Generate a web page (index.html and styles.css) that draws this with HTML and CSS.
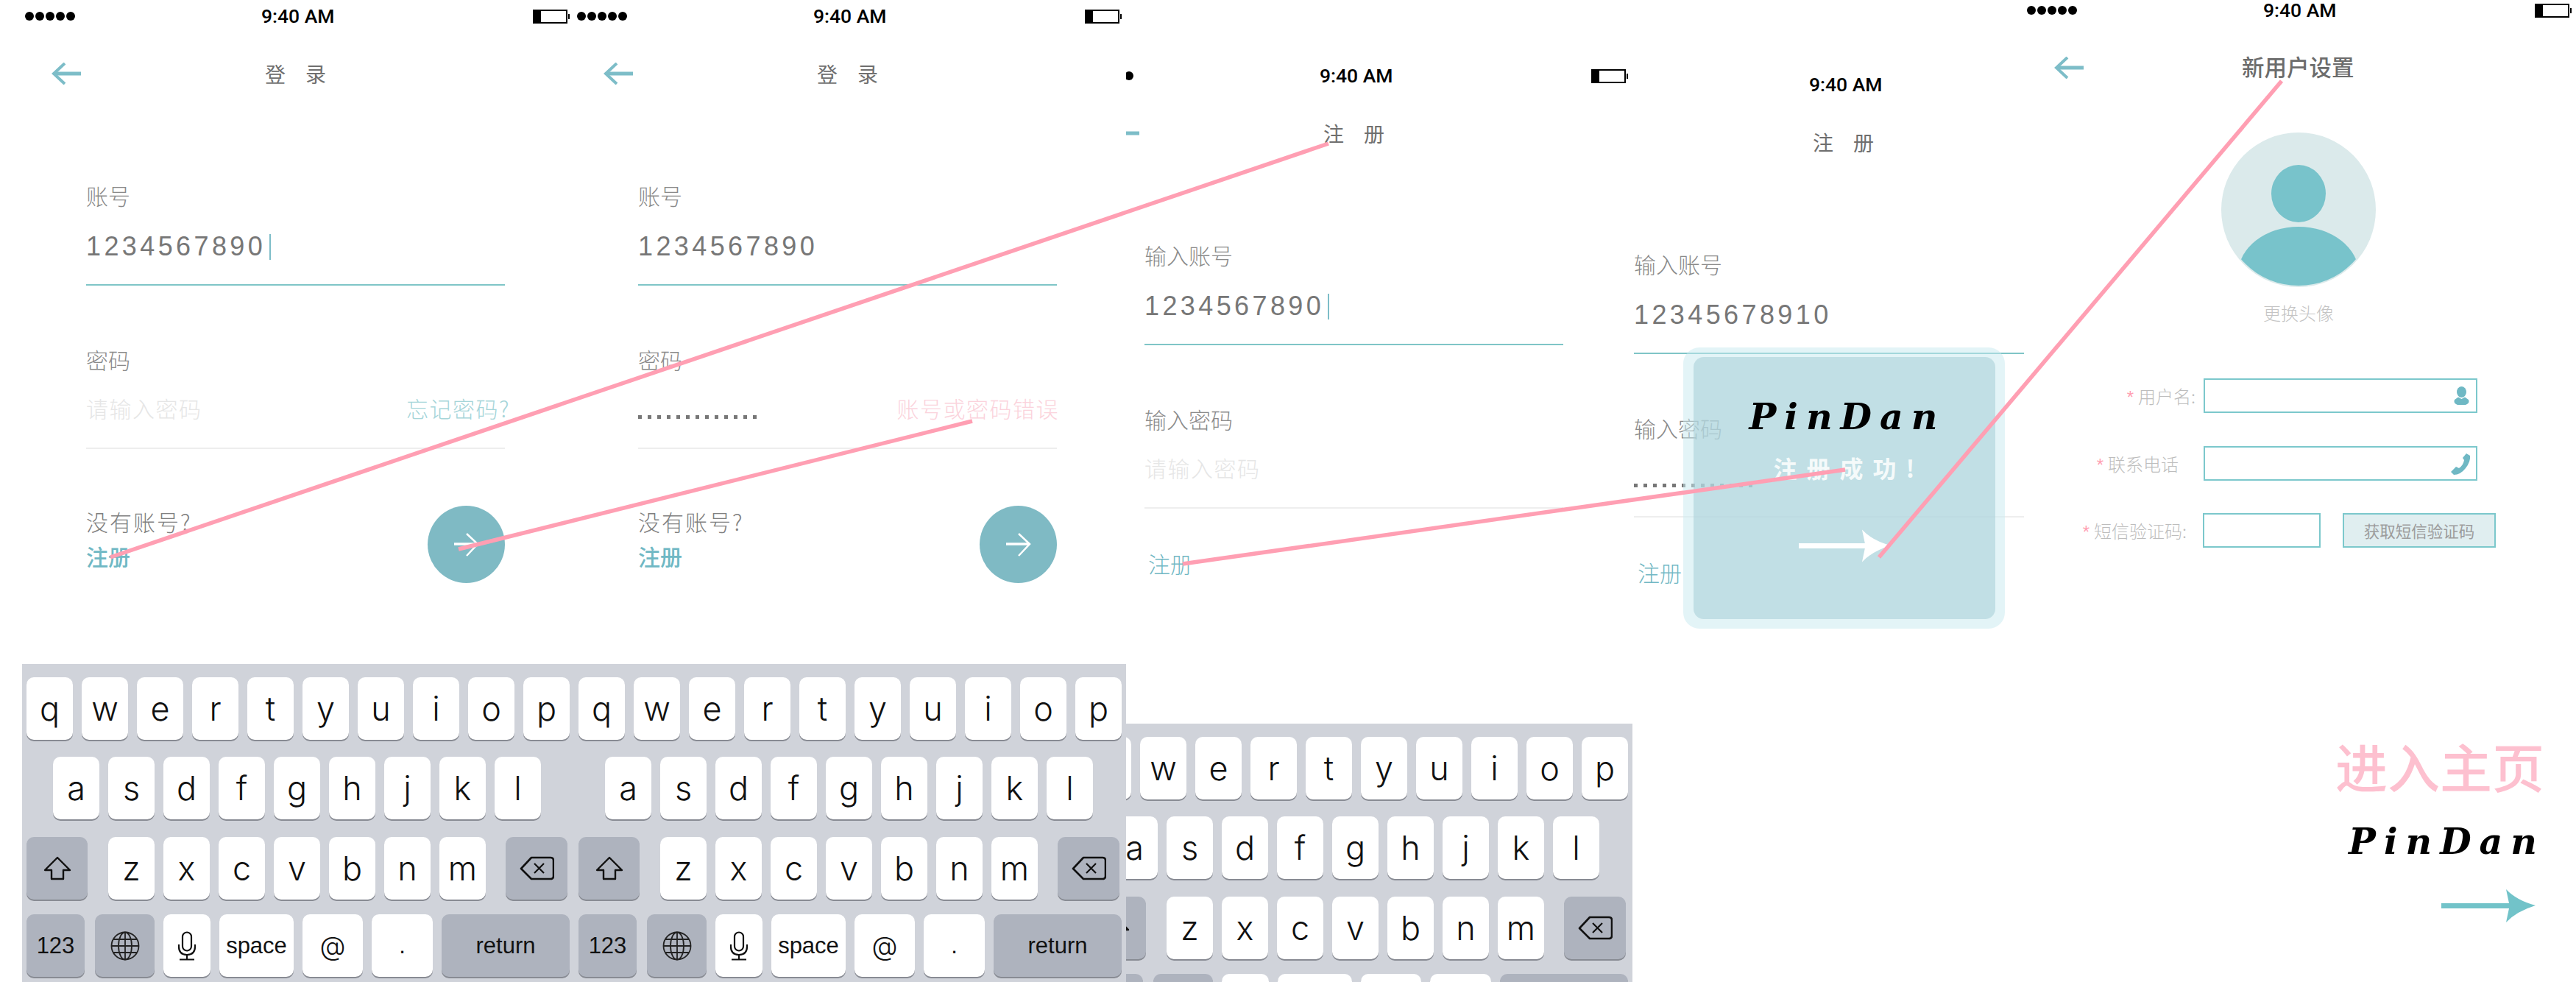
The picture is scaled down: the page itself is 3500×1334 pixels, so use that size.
FILE: index.html
```html
<!DOCTYPE html>
<html lang="zh-CN">
<head>
<meta charset="utf-8">
<title>PinDan</title>
<link rel="stylesheet" href="styles.css">
</head>
<body>
<svg class="defs" width="0" height="0" aria-hidden="true">
  <symbol id="i-back" viewBox="0 0 40 30"><path d="M4 15H40" stroke-width="5" fill="none"/><path d="M18 1 3 15 18 29" stroke-width="4" fill="none"/></symbol>
  <symbol id="i-next" viewBox="0 0 34 32"><path d="M0 15H32" stroke-width="3.5" fill="none"/><path d="M17 1 32 15 17 31" stroke-width="2.5" fill="none"/></symbol>
  <symbol id="i-shift" viewBox="0 0 38 33"><path d="M19 2 2 19H11V31H27V19H36Z" fill="none" stroke="#111" stroke-width="2.4" stroke-linejoin="round"/></symbol>
  <symbol id="i-del" viewBox="0 0 47 33"><path d="M16 2H42Q46 2 46 6V27Q46 31 42 31H16L2 17Z" fill="none" stroke="#111" stroke-width="2.6" stroke-linejoin="round"/><path d="M20 10 33 23M33 10 20 23" fill="none" stroke="#111" stroke-width="2.2"/></symbol>
  <symbol id="i-globe" viewBox="0 0 40 40"><g fill="none" stroke="#222" stroke-width="1.8"><circle cx="20" cy="20" r="18.5"/><ellipse cx="20" cy="20" rx="9" ry="18.5"/><path d="M20 1.500V38.500M1.500 20H38.500M4 11H36M4 29H36"/></g></symbol>
  <symbol id="i-mic" viewBox="0 0 26 40"><g fill="none" stroke="#111" stroke-width="2.2"><rect x="7" y="1.500" width="12" height="25" rx="6"/><path d="M2 18V21Q2 32 13 32T24 21V18M13 32V38M3 38.500H23"/></g></symbol>
  <symbol id="i-long" viewBox="0 0 128 45"><path d="M0 19H92L88 0Q102 15 128 22Q102 30 88 45L92 26H0Z"/></symbol>
</svg>

<main class="board">

  <section class="screen s4">
    <div class="top"><div class="status"><span class="dots-col"></span><span class="time">9:40 AM</span></div>
      <div class="nav"><span class="nav-gap"></span><h1 class="title">注册</h1></div>
      <div class="form">
        <p class="label">输入账号</p>
        <div class="value"><span>12345678910</span></div>
        <div class="rule rule-on"></div>
        <p class="label label-2">输入密码</p>
        <div class="pw-row"><span class="pw-dots"></span></div>
        <div class="rule"></div>
        <a class="reg-plain">注册</a>
      </div>
    </div>
    <div class="modal">
      <div class="modal-in">
        <p class="brand">PinDan</p>
        <p class="ok">注册成功!</p>
        <svg class="modal-arrow"><use href="#i-long"/></svg>
      </div>
    </div>
  </section>

  <section class="screen s3">
    <div class="top"><div class="status"><span class="dots-col"><i></i><i></i><i></i><i></i><i></i></span><span class="time">9:40 AM</span><span class="battery"></span></div>
      <div class="nav"><svg class="back"><use href="#i-back"/></svg><h1 class="title">注册</h1></div>
      <div class="form">
        <p class="label">输入账号</p>
        <div class="value"><span>1234567890</span><i class="caret"></i></div>
        <div class="rule rule-on"></div>
        <p class="label label-2">输入密码</p>
        <div class="pw-row"><span class="hint">请输入密码</span></div>
        <div class="rule"></div>
        <a class="reg-plain">注册</a>
      </div>
    </div>
    <div class="kb">
      <div class="kr kr1"><b class="k">q</b><b class="k">w</b><b class="k">e</b><b class="k">r</b><b class="k">t</b><b class="k">y</b><b class="k">u</b><b class="k">i</b><b class="k">o</b><b class="k">p</b></div>
      <div class="kr kr2"><b class="k">a</b><b class="k">s</b><b class="k">d</b><b class="k">f</b><b class="k">g</b><b class="k">h</b><b class="k">j</b><b class="k">k</b><b class="k">l</b></div>
      <div class="kr kr3"><b class="k k-g k-shift"><svg class="ic-shift"><use href="#i-shift"/></svg></b><b class="k">z</b><b class="k">x</b><b class="k">c</b><b class="k">v</b><b class="k">b</b><b class="k">n</b><b class="k">m</b><b class="k k-g k-del"><svg class="ic-del"><use href="#i-del"/></svg></b></div>
      <div class="kr kr4"><b class="k k-g k-num"></b><b class="k k-g k-globe"></b><b class="k k-mic"></b><b class="k k-space"></b><b class="k k-at"></b><b class="k k-dot"></b><b class="k k-g k-ret"></b></div>
    </div>
  </section>

  <section class="screen s2">
    <div class="top"><div class="status"><span class="dots-col"><i></i><i></i><i></i><i></i><i></i></span><span class="time">9:40 AM</span><span class="battery"></span></div>
      <div class="nav"><svg class="back"><use href="#i-back"/></svg><h1 class="title">登录</h1></div>
      <div class="form">
        <p class="label">账号</p>
        <div class="value"><span>1234567890</span></div>
        <div class="rule rule-on"></div>
        <p class="label label-2">密码</p>
        <div class="pw-row"><span class="pw-dots"></span><span class="err">账号或密码错误</span></div>
        <div class="rule"></div>
        <div class="foot">
          <div class="foot-left"><p class="ask">没有账号?</p><a class="reg">注册</a></div>
          <div class="go"><svg class="go-arrow"><use href="#i-next"/></svg></div>
        </div>
      </div>
    </div>
    <div class="kb">
      <div class="kr kr1"><b class="k">q</b><b class="k">w</b><b class="k">e</b><b class="k">r</b><b class="k">t</b><b class="k">y</b><b class="k">u</b><b class="k">i</b><b class="k">o</b><b class="k">p</b></div>
      <div class="kr kr2"><b class="k">a</b><b class="k">s</b><b class="k">d</b><b class="k">f</b><b class="k">g</b><b class="k">h</b><b class="k">j</b><b class="k">k</b><b class="k">l</b></div>
      <div class="kr kr3"><b class="k k-g k-shift"><svg class="ic-shift"><use href="#i-shift"/></svg></b><b class="k">z</b><b class="k">x</b><b class="k">c</b><b class="k">v</b><b class="k">b</b><b class="k">n</b><b class="k">m</b><b class="k k-g k-del"><svg class="ic-del"><use href="#i-del"/></svg></b></div>
      <div class="kr kr4"><b class="k k-g k-num sm">123</b><b class="k k-g k-globe"><svg class="ic-globe"><use href="#i-globe"/></svg></b><b class="k k-mic"><svg class="ic-mic"><use href="#i-mic"/></svg></b><b class="k k-space sm">space</b><b class="k k-at">@</b><b class="k k-dot sm">.</b><b class="k k-g k-ret sm">return</b></div>
    </div>
  </section>

  <section class="screen s1">
    <div class="top"><div class="status"><span class="dots-col"><i></i><i></i><i></i><i></i><i></i></span><span class="time">9:40 AM</span><span class="battery"></span></div>
      <div class="nav"><svg class="back"><use href="#i-back"/></svg><h1 class="title">登录</h1></div>
      <div class="form">
        <p class="label">账号</p>
        <div class="value"><span>1234567890</span><i class="caret"></i></div>
        <div class="rule rule-on"></div>
        <p class="label label-2">密码</p>
        <div class="pw-row"><span class="hint">请输入密码</span><span class="forgot">忘记密码?</span></div>
        <div class="rule"></div>
        <div class="foot">
          <div class="foot-left"><p class="ask">没有账号?</p><a class="reg">注册</a></div>
          <div class="go"><svg class="go-arrow"><use href="#i-next"/></svg></div>
        </div>
      </div>
    </div>
    <div class="kb">
      <div class="kr kr1"><b class="k">q</b><b class="k">w</b><b class="k">e</b><b class="k">r</b><b class="k">t</b><b class="k">y</b><b class="k">u</b><b class="k">i</b><b class="k">o</b><b class="k">p</b></div>
      <div class="kr kr2"><b class="k">a</b><b class="k">s</b><b class="k">d</b><b class="k">f</b><b class="k">g</b><b class="k">h</b><b class="k">j</b><b class="k">k</b><b class="k">l</b></div>
      <div class="kr kr3"><b class="k k-g k-shift"><svg class="ic-shift"><use href="#i-shift"/></svg></b><b class="k">z</b><b class="k">x</b><b class="k">c</b><b class="k">v</b><b class="k">b</b><b class="k">n</b><b class="k">m</b><b class="k k-g k-del"><svg class="ic-del"><use href="#i-del"/></svg></b></div>
      <div class="kr kr4"><b class="k k-g k-num sm">123</b><b class="k k-g k-globe"><svg class="ic-globe"><use href="#i-globe"/></svg></b><b class="k k-mic"><svg class="ic-mic"><use href="#i-mic"/></svg></b><b class="k k-space sm">space</b><b class="k k-at">@</b><b class="k k-dot sm">.</b><b class="k k-g k-ret sm">return</b></div>
    </div>
  </section>

  <section class="screen s5">
    <div class="status"><span class="dots-col"><i></i><i></i><i></i><i></i><i></i></span><span class="time">9:40 AM</span><span class="battery"></span></div>
    <div class="nav"><svg class="back"><use href="#i-back"/></svg><h1 class="title title-5">新用户设置</h1></div>
    <div class="avatar-box">
      <svg class="avatar" viewBox="0 0 210 210">
        <defs><clipPath id="ava"><circle cx="105" cy="105" r="103"/></clipPath></defs>
        <circle cx="105" cy="105" r="105" fill="#dbeaeb"/>
        <ellipse cx="105" cy="83" rx="37" ry="39" fill="#78c3cb"/>
        <ellipse cx="105" cy="192" rx="82" ry="64" fill="#78c3cb" clip-path="url(#ava)"/>
      </svg>
      <p class="avatar-cap">更换头像</p>
    </div>
    <div class="fields">
      <div class="f-row">
        <label class="f-label f1"><em>*</em>用户名:</label>
        <div class="f-input f-wide">
          <svg class="f-ic" viewBox="0 0 21 26"><ellipse cx="10.500" cy="7.500" rx="6.500" ry="7.500"/><path d="M6 14.500 10.500 17 15 14.500 20 18Q22 23 16 25H5Q-1 23 1 18Z"/></svg>
        </div>
      </div>
      <div class="f-row f-row2">
        <label class="f-label f2"><em>*</em>联系电话</label>
        <div class="f-input f-wide">
          <svg class="f-ic f-phone" viewBox="0 0 28 30"><path d="M22 1 27 4Q28 12 21 21T5 30L1 26 8 19 12 21Q18 17 19 10L17 7Z"/></svg>
        </div>
      </div>
      <div class="f-row f-row3">
        <label class="f-label f3"><em>*</em>短信验证码:</label>
        <div class="f-input f-code"></div>
        <button class="f-btn">获取短信验证码</button>
      </div>
    </div>
    <div class="enter">
      <p class="enter-txt">进入主页</p>
      <p class="brand brand-5">PinDan</p>
      <svg class="enter-arrow"><use href="#i-long"/></svg>
    </div>
  </section>

  <svg class="links" viewBox="0 0 3500 1334">
    <path d="M150 757 1805 195"/>
    <path d="M623 746 1321 572"/>
    <path d="M1607 766 2507 638"/>
    <path d="M2553 757 3100 110"/>
  </svg>
</main>
</body>
</html>
```

FILE: styles.css
```css
* { box-sizing: border-box; margin: 0; padding: 0; }
html, body { background: #fff; }
body { width: 3500px; height: 1334px; overflow: hidden; font-family: "Noto Sans CJK SC", "Liberation Sans", sans-serif; }
.defs { position: absolute; }

/* free canvas of artboards */
.board { position: relative; width: 3500px; height: 1334px; overflow: hidden; background: #fff; }
.screen { position: absolute; width: 780px; height: 1334px; background: #fff; }
.s1 { left: 0; top: 0; z-index: 4; }
.s2 { left: 750px; top: 0; z-index: 3; }
.s3 { left: 1438px; top: 81px; z-index: 2; }
.s4 { left: 2103px; top: 93px; z-index: 1; background: transparent; }
.s5 { left: 2750px; top: -8px; width: 750px; height: 1342px; z-index: 5; }
.links { position: absolute; left: 0; top: 0; width: 3500px; height: 1334px; z-index: 9; pointer-events: none; }
.links path { fill: none; stroke: #ff9fb3; stroke-width: 5.500px; }

/* status bar */
.top { height: 902px; }
.status { display: flex; align-items: center; height: 44px; padding-left: 34px; }
.s5 .status { margin-left: -30px; width: 780px; }
.dots-col { display: flex; gap: 2px; width: 321px; height: 12px; }
.dots-col i { width: 12px; height: 12px; border-radius: 50%; background: #000; }
.time { width: 98px; font: 500 26.500px/26px Roboto, "Liberation Sans", sans-serif; color: #000; white-space: nowrap; }
.battery { position: relative; width: 47px; height: 19px; margin-left: 271px; border: 2.500px solid #000; border-left-width: 11px; }
.battery::after { content: ""; position: absolute; right: -5px; top: 4px; width: 2px; height: 7px; background: #000; }

/* nav */
.nav { display: flex; align-items: center; height: 30px; margin-top: 41px; padding-left: 70px; }
.s5 .nav { padding-left: 41px; }
.back { width: 40px; height: 30px; stroke: #7dbdc8; flex: none; }
.nav-gap { width: 40px; }
.title { margin-left: 250px; font-size: 28px; font-weight: 400; line-height: 30px; letter-spacing: 27px; color: #6f6f6f; white-space: nowrap; }
.title-5 { margin-left: 215px; margin-top: -4px; font-size: 30.500px; font-weight: 500; letter-spacing: 0; color: #6c6c6c; }

/* login / register form */
.form { width: 686px; padding-left: 117px; }
.label { height: 30px; margin-top: 135px; font-size: 30px; font-weight: 300; line-height: 30px; color: #8a8a8a; white-space: nowrap; }
.label-2 { margin-top: 85px; }
.value { display: flex; align-items: center; height: 36px; margin-top: 37px; font: 36px/36px "Liberation Sans", sans-serif; letter-spacing: 4.400px; color: #777; }
.label-2 + .pw-row { margin-top: 36px; }
.caret { width: 2px; height: 35px; margin-left: 5px; background: #7dbdc8; }
.rule { height: 2px; margin-top: 33px; background: #eeeeee; }
.rule-on { background: #7fc5c7; }
.pw-row { display: flex; justify-content: space-between; height: 30px; font-size: 30px; font-weight: 300; line-height: 30px; white-space: nowrap; }
.pw-row + .rule { margin-top: 39px; }
.hint { color: #e6e6e6; letter-spacing: 1.500px; }
.forgot { margin-right: -7px; color: #a6d5d9; letter-spacing: 1.500px; }
.err { margin-right: -3px; color: #fbd3dc; letter-spacing: 1.500px; }
.pw-dots { width: 164px; height: 5px; margin-top: 25px; background: repeating-linear-gradient(90deg, #777 0 5px, transparent 5px 13px); }
.foot { display: flex; justify-content: space-between; margin-top: 77px; }
.foot-left { padding-top: 6px; }
.ask { font-size: 30px; font-weight: 300; line-height: 30px; letter-spacing: 2px; color: #808080; }
.reg { display: block; margin-top: 17px; font-size: 30px; font-weight: 500; line-height: 30px; color: #6fb8c4; }
.reg-plain { display: block; margin: 59px 0 0 5px; font-size: 30px; font-weight: 300; line-height: 30px; color: #72b8c4; }
.go { display: flex; align-items: center; justify-content: center; width: 105px; height: 105px; border-radius: 50%; background: #7fbac4; }
.go-arrow { width: 34px; height: 32px; stroke: #fff; }

/* keyboard */
.kb { width: 750px; height: 432px; margin-left: 30px; padding: 18px 6px 0; overflow: hidden; background: #d0d3da; }
.kr { display: flex; gap: 12px; }
.kr2 { margin-top: 23px; padding-left: 36px; }
.kr3 { margin-top: 24px; }
.kr4 { margin-top: 20px; }
.k { display: flex; align-items: center; justify-content: center; flex: none; width: 63px; height: 85px; border-radius: 10px; background: #fff; box-shadow: 0 2px 0 #888b93; font: 300 45px/1 Inter, "Liberation Sans", sans-serif; color: #111; }
.k-g { background: #aeb3be; }
.k-shift { width: 83px; margin-right: 16px; }
.k-del { width: 84px; margin-left: 15px; }
.k-num { width: 79px; }
.k-globe { width: 81px; margin-left: 2px; }
.k-mic { width: 64px; }
.k-space { width: 101px; }
.k-at { width: 82px; font-size: 36px; }
.k-dot { width: 83px; }
.k-ret { width: 174px; }
.sm { font: 400 31px/1 "Liberation Sans", sans-serif; }
.ic-shift { width: 38px; height: 33px; }
.ic-del { width: 47px; height: 33px; }
.ic-globe { width: 40px; height: 40px; }
.ic-mic { width: 26px; height: 40px; }

/* success modal */
.modal { position: absolute; left: 184px; top: 379px; width: 437px; height: 382px; padding: 13px 13px 13px 14px; border-radius: 22px; background: rgba(199, 233, 239, .5); }
.modal-in { display: flex; flex-direction: column; align-items: center; height: 356px; padding-top: 58px; border-radius: 14px; background: rgba(170, 209, 217, .6); }
.brand { padding-left: 8px; font: italic 700 49px/46px "DejaVu Serif", serif; letter-spacing: 11px; color: #000; white-space: nowrap; }
.ok { margin-top: 24px; padding-left: 12px; font-size: 32px; font-weight: 700; line-height: 44px; letter-spacing: 13px; color: rgba(255, 255, 255, .85); white-space: nowrap; }
.modal-arrow { width: 125px; height: 45px; margin-top: 62px; fill: #fff; }

/* new user */
.avatar-box { display: flex; flex-direction: column; align-items: center; margin-top: 73px; padding-right: 4px; }
.avatar { width: 210px; height: 210px; }
.avatar-cap { margin-top: 21px; font-size: 24px; font-weight: 300; line-height: 28px; color: #c4c4c4; }
.fields { margin-top: 75px; }
.f-row { display: flex; align-items: center; height: 47px; }
.f-row2 { margin-top: 45px; }
.f-row3 { margin-top: 44px; }
.f-label { flex: none; font-size: 24px; font-weight: 300; line-height: 30px; text-align: right; color: #bdbdbd; white-space: nowrap; }
.f-label em { margin-right: 6px; font: 24px/24px "Liberation Sans", sans-serif; color: #ff9fb3; }
.f1 { width: 244px; padding-right: 11px; }
.f2 { width: 244px; padding-right: 34px; }
.f3 { width: 243px; padding-right: 22px; }
.f-input { display: flex; align-items: center; justify-content: flex-end; height: 47px; border: 2px solid #7cc8cc; background: #fff; }
.f-wide { width: 372px; padding-right: 9px; }
.f-code { width: 160px; }
.f-ic { width: 21px; height: 26px; fill: #6fb8c4; }
.f-phone { width: 28px; height: 30px; margin-right: -2px; }
.f-btn { width: 208px; height: 47px; margin-left: 30px; border: 2px solid #7cc8cc; background: #e0eef0; font: 400 21.500px/1 "Noto Sans CJK SC", sans-serif; color: #9c9c9c; }
.enter { display: flex; flex-direction: column; align-items: flex-end; margin-top: 255px; }
.enter-txt { margin-right: 43px; font-size: 71px; font-weight: 500; line-height: 80px; color: #fdc0cf; white-space: nowrap; }
.brand-5 { margin-top: 41px; margin-right: 42px; }
.enter-arrow { width: 128px; height: 45px; margin: 42px 55px 0 0; fill: #72c3c9; }
```
